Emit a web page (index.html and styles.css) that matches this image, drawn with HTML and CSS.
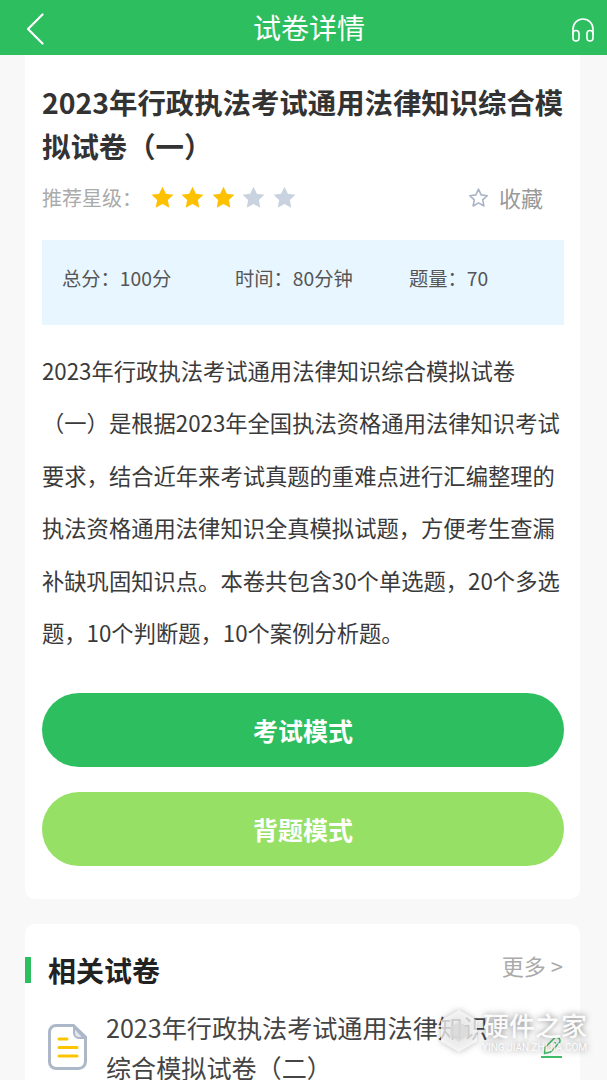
FILE: index.html
```html
<!DOCTYPE html>
<html lang="zh-CN">
<head>
<meta charset="utf-8">
<title>试卷详情</title>
<link rel="stylesheet" href="styles.css">
</head>
<body>
<header class="topbar">
  <svg class="back" viewBox="0 0 18 32" width="18" height="32"><path d="M16.500 1.500 2 16l14.500 14.500" fill="none" stroke="#fff" stroke-width="2.200" stroke-linecap="round" stroke-linejoin="round"/></svg>
  <h1 class="topbar-title">试卷详情</h1>
  <svg class="phones" viewBox="0 0 24 24" width="24" height="24"><path d="M2 17V11a10 10 0 0 1 20 0v6" fill="none" stroke="#fff" stroke-width="1.600"/><rect x="2" y="12.500" width="6" height="10.500" rx="3" fill="none" stroke="#fff" stroke-width="1.600"/><rect x="16" y="12.500" width="6" height="10.500" rx="3" fill="none" stroke="#fff" stroke-width="1.600"/></svg>
</header>
<main class="page">
  <section class="card detail">
    <h2 class="paper-title">2023年行政执法考试通用法律知识综合模拟试卷（一）</h2>
    <div class="rating-row">
      <span class="rating-label">推荐星级：</span>
      <div class="stars">
        <svg class="star on" viewBox="0 0 24 24"><path d="M12 .8l3.500 7.300 7.900 1.100-5.800 5.500 1.500 8-7.100-3.900-7.100 3.900 1.500-8L.6 9.200l7.900-1.100z"/></svg>
        <svg class="star on" viewBox="0 0 24 24"><path d="M12 .8l3.500 7.300 7.900 1.100-5.800 5.500 1.500 8-7.100-3.900-7.100 3.900 1.500-8L.6 9.200l7.900-1.100z"/></svg>
        <svg class="star on" viewBox="0 0 24 24"><path d="M12 .8l3.500 7.300 7.900 1.100-5.800 5.500 1.500 8-7.100-3.900-7.100 3.900 1.500-8L.6 9.200l7.900-1.100z"/></svg>
        <svg class="star" viewBox="0 0 24 24"><path d="M12 .8l3.500 7.300 7.900 1.100-5.800 5.500 1.500 8-7.100-3.900-7.100 3.900 1.500-8L.6 9.200l7.900-1.100z"/></svg>
        <svg class="star" viewBox="0 0 24 24"><path d="M12 .8l3.500 7.300 7.900 1.100-5.800 5.500 1.500 8-7.100-3.900-7.100 3.900 1.500-8L.6 9.200l7.900-1.100z"/></svg>
      </div>
      <div class="fav">
        <svg class="fav-star" viewBox="0 0 24 24"><path d="M12 2.500l3 6.500 7 .9-5.200 4.800 1.400 7-6.200-3.500-6.200 3.500 1.400-7L2 9.900 9 9z" fill="none" stroke="#a9b4c4" stroke-width="1.800" stroke-linejoin="round"/></svg>
        <span>收藏</span>
      </div>
    </div>
    <div class="stats">
      <span class="stat-a">总分：100分</span>
      <span class="stat-b">时间：80分钟</span>
      <span>题量：70</span>
    </div>
    <p class="intro">2023年行政执法考试通用法律知识综合模拟试卷（一）是根据2023年全国执法资格通用法律知识考试要求，结合近年来考试真题的重难点进行汇编整理的执法资格通用法律知识全真模拟试题，方便考生查漏补缺巩固知识点。本卷共包含30个单选题，20个多选题，10个判断题，10个案例分析题。</p>
    <div class="actions">
      <button class="btn btn-exam">考试模式</button>
      <button class="btn btn-study">背题模式</button>
    </div>
  </section>
  <section class="card related">
    <div class="related-head">
      <h3 class="related-title">相关试卷</h3>
      <span class="more">更多 &gt;</span>
    </div>
    <div class="paper-item">
      <svg class="doc" viewBox="0 0 39 46" width="39" height="46"><path d="M8 1.500h17.500L37.500 13v24.500a7 7 0 0 1-7 7H8a6.500 6.500 0 0 1-6.500-6.500V8A6.500 6.500 0 0 1 8 1.500z" fill="#fff" stroke="#acb8c8" stroke-width="3" stroke-linejoin="round"/><path d="M26 3v6a5 5 0 0 0 5 5h5z" fill="#e3e7ed" stroke="#acb8c8" stroke-width="2" stroke-linejoin="round"/><path d="M11 15h8M11 23.500h18M11 32h18" stroke="#fdc500" stroke-width="3" stroke-linecap="round"/></svg>
      <p class="item-name">2023年行政执法考试通用法律知识综合模拟试卷（二）</p>
      <svg class="pencil" viewBox="0 0 22 21" width="22" height="21"><path d="M4 10.500 12.500 2a3 3 0 0 1 6 3.500L9.500 15 3.500 16.500z" fill="none" stroke="#3fbf6b" stroke-width="1.500" stroke-linejoin="round"/><circle cx="14" cy="6" r="1" fill="#3fbf6b"/><path d="M0 20h21" stroke="#3fbf6b" stroke-width="2"/></svg>
    </div>
  </section>
</main>
<div class="watermark">
  <svg class="wm-logo" viewBox="0 0 38 44" width="38" height="44"><path d="M19 1 37 11.500v21L19 43 1 32.500v-21z" fill="#fff" fill-opacity=".72"/><path d="M19 13l9 5v8.500L19 33l-9-6.500V18z" fill="#d8d8d8" fill-opacity=".75"/></svg>
  <div class="wm-text">
    <span class="wm-cn">硬件之家</span>
    <span class="wm-en">YING JIAN ZHIJIA.COM</span>
  </div>
</div>
</body>
</html>
```
FILE: styles.css
```css
* { box-sizing: border-box; }
html, body { margin: 0; padding: 0; }
body {
  width: 607px;
  height: 1080px;
  overflow: hidden;
  position: relative;
  background: #f8f8f8;
  font-family: "Noto Sans CJK SC", "Noto Sans", sans-serif;
  color: #333;
}
h1, h2, h3, p { margin: 0; }

.topbar {
  height: 55px;
  background: #2dbe60;
  display: flex;
  align-items: center;
  justify-content: space-between;
  padding: 0 12px 0 26px;
  position: relative;
}
.back { display: block; margin-top: 3px; }
.topbar-title {
  position: absolute;
  left: 0;
  right: 0;
  text-align: center;
  color: #fff;
  font-size: 28px;
  font-weight: 400;
  line-height: 55px;
  padding-left: 11px;
}
.phones { display: block; margin-top: 4px; }

.page { padding: 0 27px 0 25px; }
.card { background: #fff; border-radius: 0 0 10px 10px; }

.detail {
  height: 844px;
  padding: 25px 16px 0 17px;
}
.paper-title {
  font-size: 28.400px;
  font-weight: 700;
  line-height: 44px;
  color: #333;
}
.rating-row {
  display: flex;
  align-items: center;
  height: 40px;
  margin-top: 9px;
  color: #aaa;
  font-size: 20px;
}
.rating-label { width: 108px; }
.stars { display: flex; gap: 7.400px; margin-left: 1px; }
.star { width: 23px; height: 23px; fill: #c9d2df; display: block; }
.star.on { fill: #fdc100; }
.fav {
  margin-left: auto;
  margin-right: 21px;
  display: flex;
  align-items: center;
  gap: 10px;
  font-size: 22px;
  color: #999;
}
.fav-star { width: 21px; height: 21px; display: block; }

.stats {
  height: 85px;
  margin-top: 23px;
  background: #e8f6ff;
  display: flex;
  align-items: center;
  padding: 0 0 9px 20px;
  font-size: 19.300px;
  color: #555;
}
.stat-a { width: 173px; }
.stat-b { width: 174px; }

.intro {
  margin-top: 19px;
  font-size: 22.300px;
  line-height: 52.400px;
  color: #3a3a3a;
}

.actions {
  margin-top: 35px;
  display: flex;
  flex-direction: column;
  gap: 25px;
}
.btn {
  height: 74px;
  border: 0;
  border-radius: 37px;
  color: #fff;
  font-family: inherit;
  font-size: 25px;
  font-weight: 700;
  padding: 0;
}
.btn-exam { background: #2dbe60; }
.btn-study { background: #96e065; }

.related {
  margin-top: 25px;
  height: 200px;
  border-radius: 10px 10px 0 0;
  padding-top: 33px;
}
.related-head {
  display: flex;
  align-items: center;
  justify-content: space-between;
  height: 26px;
  padding: 0 17px 0 0;
  border-left: 6px solid #2dbe60;
}
.related-title {
  font-size: 28px;
  font-weight: 700;
  color: #222;
  padding-left: 17px;
  line-height: 26px;
}
.more { font-size: 22px; color: #aaa; line-height: 26px; margin-top: -10px; }

.paper-item {
  display: flex;
  align-items: flex-start;
  margin-top: 25px;
  padding-left: 23px;
  position: relative;
}
.doc { flex: none; margin-top: 16px; }
.item-name {
  width: 395px;
  margin-left: 19px;
  font-size: 25.100px;
  line-height: 39.500px;
  color: #444;
}
.pencil { position: absolute; left: 516px; top: 29px; }

.watermark {
  position: absolute;
  left: 440px;
  top: 1009px;
  display: flex;
  align-items: flex-start;
  gap: 4px;
  color: rgba(255, 255, 255, 0.95);
  text-shadow: 0 0 6px rgba(70, 70, 70, 0.7);
}
.wm-logo { flex: none; filter: drop-shadow(0 0 3px rgba(70, 70, 70, 0.5)); }
.wm-text { display: flex; flex-direction: column; align-items: flex-end; }
.wm-cn { font-size: 26px; line-height: 32px; font-weight: 500; }
.wm-en { font-family: "Roboto", sans-serif; font-size: 10px; line-height: 13px; }
```
